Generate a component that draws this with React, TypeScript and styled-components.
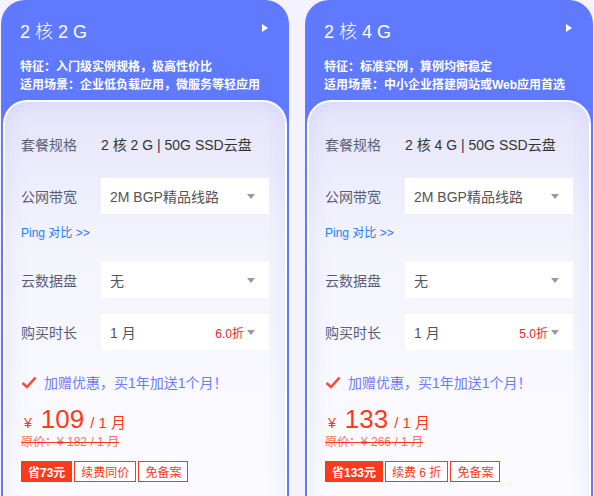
import React from 'react';
import styled, { createGlobalStyle } from 'styled-components';

const GlobalStyle = createGlobalStyle`
  html, body {
    margin: 0;
    padding: 0;
    background: #f3f2fd;
  }
  body {
    font-family: "Liberation Sans", "Noto Sans CJK SC", sans-serif;
  }
`;

const BLUE = '#607aff';
const RED = '#fa3a1c';

const Page = styled.div`
  display: flex;
  gap: 16px;
  padding-left: 1px;
  height: 496px;
  overflow: hidden;
`;

const Card = styled.div`
  flex-shrink: 0;
  width: 288px;
  box-sizing: border-box;
  border: 2px solid ${BLUE};
  border-bottom: none;
  border-radius: 24px 24px 0 0;
  background: ${BLUE};
  display: flex;
  flex-direction: column;
`;

const Header = styled.div`
  padding: 16px 19px 6px 17px;
  color: #fff;
`;

const TitleRow = styled.div`
  display: flex;
  justify-content: space-between;
  align-items: center;
  margin-bottom: 12px;
`;

const Title = styled.div`
  font-size: 18px;
  line-height: 28px;
  font-weight: 300;
`;

const Arrow = styled.span`
  width: 0;
  height: 0;
  border-top: 4.5px solid transparent;
  border-bottom: 4.5px solid transparent;
  border-left: 6px solid #fff;
  margin-top: -8px;
`;

const Feature = styled.div`
  font-size: 12px;
  line-height: 18px;
  font-weight: 600;
  white-space: nowrap;
`;

const Panel = styled.div`
  flex: 1;
  border: 2px solid rgba(255, 255, 255, 0.85);
  border-bottom: none;
  border-radius: 24px 24px 0 0;
  background: linear-gradient(180deg, #e5e5fb 0%, #f4f4fd 35%, #fcfcff 100%);
  box-shadow: inset 0 0 22px rgba(140, 140, 240, 0.18);
  padding: 24px 16px 40px 16px;
`;

const Row = styled.div<{ $gap?: number }>`
  display: flex;
  align-items: center;
  height: 36px;
  margin-top: ${({ $gap }) => ($gap ?? 16)}px;
`;

const Label = styled.div`
  width: 80px;
  flex-shrink: 0;
  font-size: 14px;
  color: #5a5f78;
`;

const Value = styled.div`
  font-size: 14px;
  color: #333;
  white-space: nowrap;
`;

const Select = styled.div`
  flex: 1;
  height: 36px;
  background: #fff;
  display: flex;
  align-items: center;
  padding: 0 14px 0 9px;
  font-size: 14px;
  color: #555;
`;

const SelectText = styled.span`
  flex: 1;
  white-space: nowrap;
`;

const Discount = styled.span`
  font-size: 12px;
  color: #f5222d;
  margin-right: 3px;
`;

const Caret = styled.span`
  width: 0;
  height: 0;
  border-left: 4.5px solid transparent;
  border-right: 4.5px solid transparent;
  border-top: 5px solid #999;
`;

const PingLink = styled.a`
  display: block;
  margin: 10px 0 20px;
  font-size: 12px;
  line-height: 18px;
  color: #1e7cf7;
  text-decoration: none;
`;

const Gift = styled.div`
  display: flex;
  align-items: center;
  gap: 7px;
  margin-top: 22px;
  height: 20px;
  font-size: 14px;
  color: #6d7df2;
  white-space: nowrap;
`;

const PriceLine = styled.div`
  display: flex;
  align-items: baseline;
  margin-top: 14px;
  padding-left: 3px;
  color: ${RED};
  line-height: 1;
`;

const Yen = styled.span`
  font-size: 14px;
  margin-right: 9px;
`;

const Amount = styled.span`
  font-size: 26px;
`;

const Per = styled.span`
  font-size: 15px;
  margin-left: 6px;
`;

const OldPrice = styled.div`
  margin-top: 2px;
  font-size: 12px;
  line-height: 16px;
  color: #f47264;
  text-decoration: line-through;
  text-decoration-color: ${RED};
  white-space: nowrap;
`;

const Tags = styled.div`
  display: flex;
  gap: 2px;
  margin-top: 11px;
`;

const Tag = styled.span<{ $filled?: boolean }>`
  height: 21px;
  box-sizing: border-box;
  display: inline-flex;
  align-items: center;
  padding: 0 6px;
  border: 1px solid ${RED};
  font-size: 12px;
  white-space: nowrap;
  font-weight: ${({ $filled }) => ($filled ? 600 : 400)};
  color: ${({ $filled }) => ($filled ? '#fff' : RED)};
  background: ${({ $filled }) => ($filled ? RED : '#fff')};
`;

const Check = () => (
  <svg width="16" height="13" viewBox="0 0 16 13">
    <path d="M1.5 7 L6 11 L14.5 1.5" fill="none" stroke="#f04a3a" strokeWidth="2.6" strokeLinejoin="miter" />
  </svg>
);

type Plan = {
  title: string;
  feature: string;
  scene: string;
  spec: string;
  discount: string;
  price: number;
  old: number;
  tags: string[];
};

const plans: Plan[] = [
  {
    title: '2 核 2 G',
    feature: '特征：入门级实例规格，极高性价比',
    scene: '适用场景：企业低负载应用，微服务等轻应用',
    spec: '2 核 2 G | 50G SSD云盘',
    discount: '6.0折',
    price: 109,
    old: 182,
    tags: ['省73元', '续费同价', '免备案'],
  },
  {
    title: '2 核 4 G',
    feature: '特征：标准实例，算例均衡稳定',
    scene: '适用场景：中小企业搭建网站或Web应用首选',
    spec: '2 核 4 G | 50G SSD云盘',
    discount: '5.0折',
    price: 133,
    old: 266,
    tags: ['省133元', '续费 6 折', '免备案'],
  },
];

const PlanCard: React.FC<{ plan: Plan }> = ({ plan }) => (
  <Card>
    <Header>
      <TitleRow>
        <Title>{plan.title}</Title>
        <Arrow />
      </TitleRow>
      <Feature>{plan.feature}</Feature>
      <Feature>{plan.scene}</Feature>
    </Header>
    <Panel>
      <Row $gap={0}>
        <Label>套餐规格</Label>
        <Value>{plan.spec}</Value>
      </Row>
      <Row>
        <Label>公网带宽</Label>
        <Select>
          <SelectText>2M BGP精品线路</SelectText>
          <Caret />
        </Select>
      </Row>
      <PingLink href="#">Ping 对比 &gt;&gt;</PingLink>
      <Row $gap={0}>
        <Label>云数据盘</Label>
        <Select>
          <SelectText>无</SelectText>
          <Caret />
        </Select>
      </Row>
      <Row>
        <Label>购买时长</Label>
        <Select>
          <SelectText>1 月</SelectText>
          <Discount>{plan.discount}</Discount>
          <Caret />
        </Select>
      </Row>
      <Gift>
        <Check />
        加赠优惠，买1年加送1个月！
      </Gift>
      <PriceLine>
        <Yen>¥</Yen>
        <Amount>{plan.price}</Amount>
        <Per>/ 1 月</Per>
      </PriceLine>
      <OldPrice>原价：¥ {plan.old} / 1 月</OldPrice>
      <Tags>
        {plan.tags.map((t, i) => (
          <Tag key={t} $filled={i === 0}>
            {t}
          </Tag>
        ))}
      </Tags>
    </Panel>
  </Card>
);

export default function App() {
  return (
    <>
      <GlobalStyle />
      <Page>
        {plans.map((p) => (
          <PlanCard key={p.title} plan={p} />
        ))}
      </Page>
    </>
  );
}
